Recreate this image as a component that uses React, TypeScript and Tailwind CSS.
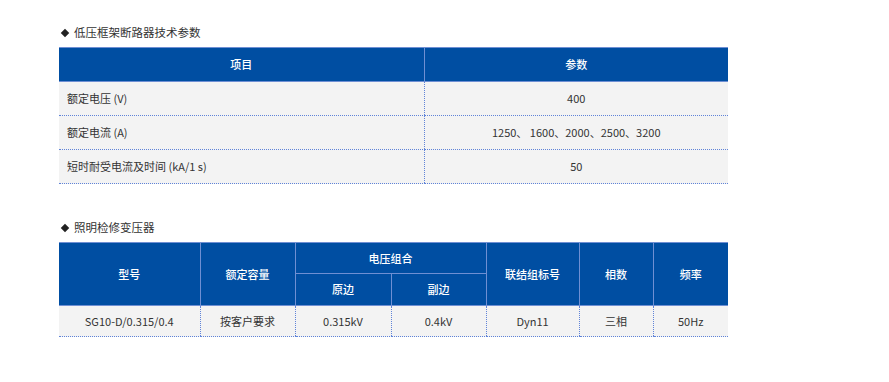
const font = { fontFamily: '"Noto Sans CJK SC", "Noto Sans", sans-serif' };

function SectionTitle({ children, className }: { children: string; className?: string }) {
  return (
    <div className={`flex items-center h-4 text-[11.5px] text-[#333] ${className ?? ""}`}>
      <span className="ml-[3px] mr-[6px] w-[6px] h-[6px] rotate-45 bg-[#222]" />
      <span>{children}</span>
    </div>
  );
}

const th =
  "bg-[#004ea2] text-white text-[11px] font-medium text-center align-middle border border-solid border-[#6f8fd3] p-0";
const td =
  "bg-[#f3f3f3] text-[#333] text-[11px] text-center align-middle border-b border-b-[#5f83d8] [border-bottom-style:dotted] p-0";
const tdDiv = "border-l border-l-[#5f83d8] [border-left-style:dotted]";

const breakerRows = [
  ["额定电压 (V)", "400"],
  ["额定电流 (A)", "1250、 1600、2000、2500、3200"],
  ["短时耐受电流及时间 (kA/1 s)", "50"],
];

const transformerRow = ["SG10-D/0.315/0.4", "按客户要求", "0.315kV", "0.4kV", "Dyn11", "三相", "50Hz"];

export default function App() {
  return (
    <div className="w-[889px] h-[382px] bg-white pl-[59px] pt-[25px]" style={font}>
      <SectionTitle>低压框架断路器技术参数</SectionTitle>
      <table className="mt-[6px] w-[669px] border-collapse table-fixed">
        <colgroup>
          <col className="w-[365px]" />
          <col className="w-[304px]" />
        </colgroup>
        <thead>
          <tr className="h-[34px]">
            <th className={`${th} border-l-0`}>项目</th>
            <th className={`${th} border-r-0`}>参数</th>
          </tr>
        </thead>
        <tbody>
          {breakerRows.map(([k, v]) => (
            <tr key={k} className="h-[34px]">
              <td className={`${td} text-left pl-2`}>{k}</td>
              <td className={`${td} ${tdDiv}`}>{v}</td>
            </tr>
          ))}
        </tbody>
      </table>

      <SectionTitle className="mt-[36px]">照明检修变压器</SectionTitle>
      <table className="mt-[6px] w-[669px] border-collapse table-fixed">
        <colgroup>
          <col className="w-[141px]" />
          <col className="w-[95px]" />
          <col className="w-[96px]" />
          <col className="w-[95px]" />
          <col className="w-[93px]" />
          <col className="w-[74px]" />
          <col className="w-[75px]" />
        </colgroup>
        <thead>
          <tr className="h-[31px]">
            <th rowSpan={2} className={`${th} border-l-0`}>型号</th>
            <th rowSpan={2} className={th}>额定容量</th>
            <th colSpan={2} className={th}>电压组合</th>
            <th rowSpan={2} className={th}>联结组标号</th>
            <th rowSpan={2} className={th}>相数</th>
            <th rowSpan={2} className={`${th} border-r-0`}>频率</th>
          </tr>
          <tr className="h-[32px]">
            <th className={th}>原边</th>
            <th className={th}>副边</th>
          </tr>
        </thead>
        <tbody>
          <tr className="h-[31px]">
            {transformerRow.map((v, i) => (
              <td key={v} className={`${td} ${i > 0 ? tdDiv : ""}`}>
                {v}
              </td>
            ))}
          </tr>
        </tbody>
      </table>
    </div>
  );
}
